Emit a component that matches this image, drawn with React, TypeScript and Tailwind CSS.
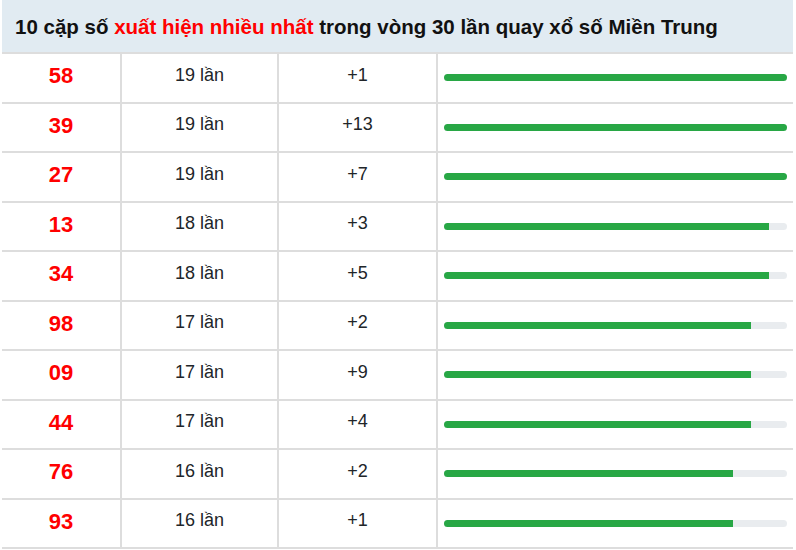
const rows = [
  { n: "58", c: 19, d: "+1" },
  { n: "39", c: 19, d: "+13" },
  { n: "27", c: 19, d: "+7" },
  { n: "13", c: 18, d: "+3" },
  { n: "34", c: 18, d: "+5" },
  { n: "98", c: 17, d: "+2" },
  { n: "09", c: 17, d: "+9" },
  { n: "44", c: 17, d: "+4" },
  { n: "76", c: 16, d: "+2" },
  { n: "93", c: 16, d: "+1" },
];

const max = 19;

export default function App() {
  return (
    <div className="w-[796px] h-[550px] bg-white overflow-hidden font-['Liberation_Sans',Arial,sans-serif]">
      <div className="ml-[2px] w-[791px]">
        <div className="h-[54px] bg-[#e1ebf2] border-b-2 border-[#dddddd] flex items-center pl-[13px] pt-[2px] text-[20.5px] font-bold text-[#111]">
          <span>
            10 cặp số <span className="text-[#ff0000]">xuất hiện nhiều nhất</span> trong vòng 30 lần quay xổ số Miền Trung
          </span>
        </div>
        {rows.map((r, i) => (
          <div key={i} className="flex h-[49.5px] border-b-2 border-[#dddddd]">
            <div className="w-[118px] flex items-center justify-center text-[22px] font-bold text-[#ff0000] pb-[4px]">
              {r.n}
            </div>
            <div className="w-[157px] border-l-2 border-[#dddddd] flex items-center justify-center text-[18px] text-[#212529] pb-[5px]">
              {r.c} lần
            </div>
            <div className="w-[159px] border-l-2 border-[#dddddd] flex items-center justify-center text-[18px] text-[#212529] pb-[5px]">
              {r.d}
            </div>
            <div className="flex-1 border-l-2 border-[#dddddd] flex items-center pl-[6px] pr-[6px]">
              <div className="w-full h-[7px] rounded-full bg-[#e9ecef] overflow-hidden">
                <div className="h-full bg-[#28a745]" style={{ width: `${(r.c / max) * 100}%` }} />
              </div>
            </div>
          </div>
        ))}
      </div>
    </div>
  );
}
